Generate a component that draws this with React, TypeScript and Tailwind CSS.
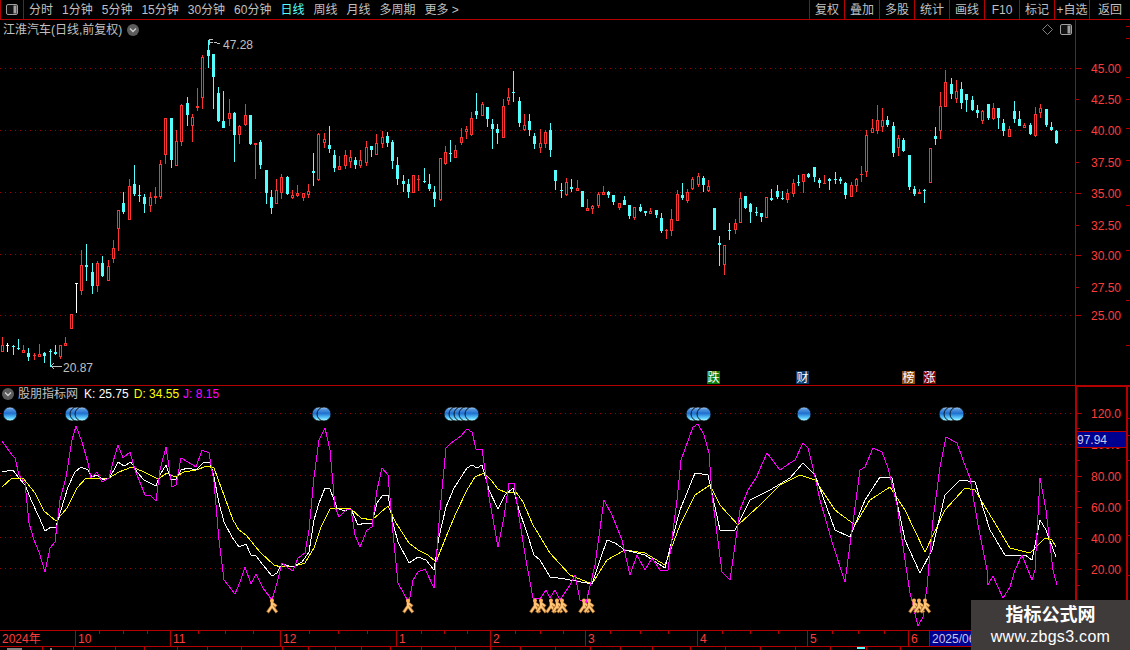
const FONT = "font-['Liberation_Sans','Noto_Sans_CJK_SC',sans-serif]";

// x, high, body top, body bottom, low, kind (r hollow red, c filled cyan, w white)
type Candle = [number, number, number, number, number, "r" | "c" | "w"];

const candles: Candle[] = [
  [2,337,345,352,352,"r"],[7,343,345,346,352,"w"],[13,345,346,347,355,"c"],[18,339,348,349,350,"c"],[23,345,350,353,353,"r"],
  [28,348,353,357,361,"c"],[34,353,355,356,360,"r"],[39,344,354,357,357,"r"],[44,352,353,356,363,"c"],[50,349,351,352,367,"c"],
  [55,345,352,354,355,"c"],[60,345,345,357,359,"r"],[65,337,343,346,346,"r"],[71,314,314,329,329,"r"],[76,283,283,284,313,"w"],
  [81,250,265,291,295,"r"],[86,244,265,267,281,"c"],[92,263,272,286,294,"c"],[97,261,263,286,292,"r"],[102,256,263,276,277,"c"],
  [108,260,266,281,281,"r"],[113,240,248,259,263,"r"],[118,210,210,229,251,"r"],[123,192,203,212,214,"c"],[129,179,186,220,220,"r"],
  [134,165,184,194,196,"c"],[139,185,195,196,202,"c"],[144,194,197,204,213,"c"],[150,192,197,206,212,"r"],[155,187,196,198,204,"r"],
  [160,160,164,197,199,"r"],[165,118,118,155,164,"r"],[171,118,118,160,168,"c"],[176,130,141,166,166,"r"],[181,104,105,142,146,"r"],
  [187,97,103,115,126,"c"],[192,114,117,126,142,"r"],[197,88,106,108,111,"r"],[202,55,57,98,109,"r"],[208,40,50,56,68,"c"],
  [213,54,54,77,109,"c"],[218,87,93,121,122,"c"],[223,91,121,128,128,"c"],[229,99,113,119,126,"r"],[234,112,113,135,162,"c"],
  [239,125,126,135,144,"r"],[245,104,115,125,126,"r"],[250,115,115,144,145,"c"],[255,143,143,145,179,"r"],[260,140,142,165,169,"c"],
  [266,170,170,193,204,"c"],[271,190,197,208,214,"c"],[276,179,190,204,204,"r"],[281,174,177,193,199,"r"],[287,176,177,194,195,"c"],
  [292,190,195,198,199,"r"],[297,185,193,196,197,"r"],[303,193,193,198,201,"r"],[308,184,191,195,198,"r"],[313,153,171,173,186,"c"],
  [318,133,134,180,181,"r"],[324,133,139,143,148,"r"],[329,126,145,149,153,"c"],[334,150,155,168,172,"c"],[339,156,166,170,170,"r"],
  [345,150,155,166,169,"r"],[350,150,157,162,168,"r"],[355,157,160,165,169,"c"],[360,150,160,166,168,"r"],[366,141,147,163,166,"r"],
  [371,146,146,150,157,"c"],[376,134,143,155,155,"r"],[382,131,137,144,148,"r"],[387,132,136,143,147,"c"],[392,140,142,161,169,"c"],
  [397,157,165,179,185,"c"],[403,175,181,184,192,"c"],[408,179,184,192,198,"c"],[413,175,175,193,193,"r"],[418,175,179,180,191,"r"],
  [424,168,181,182,183,"c"],[429,174,184,189,191,"c"],[434,186,192,199,207,"c"],[440,158,158,200,201,"r"],[445,146,152,164,165,"r"],
  [450,140,153,154,162,"c"],[455,145,150,158,158,"r"],[461,128,137,143,145,"r"],[466,126,129,132,139,"r"],[471,112,118,135,136,"r"],
  [476,93,111,115,119,"c"],[482,102,104,116,116,"r"],[487,107,107,119,127,"c"],[492,119,124,129,149,"c"],[497,124,129,133,144,"c"],
  [503,99,106,138,138,"r"],[508,88,97,101,105,"r"],[513,71,92,93,102,"c"],[519,97,101,123,127,"c"],[524,114,125,130,131,"r"],
  [529,114,121,130,136,"c"],[534,133,136,144,149,"c"],[540,129,143,148,153,"r"],[545,130,132,144,148,"r"],[550,123,130,150,157,"c"],
  [555,170,170,181,190,"c"],[561,183,190,191,198,"c"],[566,178,182,195,196,"r"],[571,179,187,189,192,"c"],[577,180,188,191,191,"r"],
  [582,191,191,207,207,"c"],[587,199,208,211,211,"r"],[592,205,206,209,214,"r"],[598,192,194,206,208,"r"],[603,186,192,195,195,"r"],
  [608,191,192,195,198,"c"],[613,195,195,202,205,"c"],[619,203,203,208,210,"r"],[624,196,200,205,205,"c"],[629,205,205,216,219,"c"],
  [634,207,207,218,220,"r"],[640,204,207,211,212,"c"],[645,211,211,213,216,"c"],[650,208,211,214,214,"r"],[656,210,210,215,218,"c"],
  [661,213,218,231,233,"c"],[666,229,230,231,239,"r"],[671,209,219,231,236,"r"],[677,190,194,221,221,"r"],[682,183,195,198,200,"c"],
  [687,189,192,201,203,"r"],[692,177,179,189,190,"r"],[698,173,176,185,187,"r"],[703,176,178,185,192,"c"],[708,180,186,191,192,"r"],
  [714,208,208,230,230,"c"],[719,236,243,245,266,"c"],[724,245,245,265,275,"r"],[729,223,230,231,240,"c"],[735,219,223,230,234,"r"],
  [740,192,198,223,223,"r"],[745,196,196,208,209,"c"],[750,203,204,212,223,"c"],[756,207,212,213,216,"c"],[761,213,213,217,222,"c"],
  [766,197,197,218,218,"r"],[771,189,198,200,201,"c"],[777,185,191,197,199,"c"],[782,191,198,199,200,"c"],[787,189,193,200,203,"r"],
  [793,179,183,194,197,"r"],[798,175,182,183,186,"c"],[803,174,174,182,193,"r"],[808,173,174,177,178,"c"],[814,167,167,177,182,"c"],
  [819,178,180,183,188,"c"],[824,175,183,184,184,"r"],[829,178,179,181,190,"c"],[835,172,179,180,184,"c"],[840,177,179,181,184,"c"],
  [845,182,183,195,199,"c"],[851,182,185,197,197,"r"],[856,178,179,186,192,"r"],[861,166,174,175,182,"r"],[866,130,135,172,177,"r"],
  [872,119,128,133,133,"r"],[877,105,120,131,134,"r"],[882,108,120,127,132,"r"],[887,116,120,125,127,"c"],[893,122,126,153,157,"c"],
  [898,135,138,148,156,"r"],[903,138,140,151,152,"c"],[909,155,155,187,190,"c"],[914,186,189,194,196,"c"],[919,189,192,194,194,"r"],
  [924,189,190,191,203,"c"],[930,148,148,183,183,"r"],[935,127,136,139,145,"c"],[940,92,106,131,139,"r"],[945,70,82,107,107,"r"],
  [951,78,84,94,99,"c"],[956,80,91,99,103,"r"],[961,82,89,103,109,"c"],[966,94,94,100,112,"c"],[972,96,100,110,111,"c"],
  [977,105,110,113,118,"c"],[982,110,111,121,124,"r"],[988,104,104,118,120,"c"],[993,103,108,119,120,"r"],[998,108,108,118,129,"c"],
  [1003,119,123,131,136,"c"],[1009,126,129,137,137,"r"],[1014,101,111,119,123,"c"],[1019,111,119,126,126,"c"],[1024,123,125,128,128,"r"],
  [1030,123,125,134,135,"c"],[1035,107,114,136,137,"r"],[1040,104,108,113,118,"r"],[1046,109,109,125,127,"c"],[1051,122,127,130,131,"c"],
  [1056,130,131,143,144,"c"],
];

const lineJ =
  "2,441 7,448 12,455 15,458 19,475 25,483 29,523 34,540 39,552 45,572 50,548 55,542 60,500 66,477 72,440 76,426 82,442 88,463 91,478 97,472 102,482 109,478 113,462 118,445 123,458 130,452 135,470 145,495 151,496 156,501 160,470 166,447 172,487 176,485 181,458 188,462 196,467 202,450 209,453 214,482 219,540 224,580 228,585 235,594 240,582 245,567 251,584 256,574 263,588 272,600 277,583 282,563 288,568 293,571 298,558 305,553 309,530 314,477 319,440 325,428 330,450 335,507 339,517 346,510 351,509 355,535 360,547 367,530 372,527 377,490 382,468 388,475 393,533 398,583 409,603 413,580 418,572 425,569 434,588 440,510 446,448 451,443 461,436 467,429 472,432 476,449 482,449 489,497 498,547 504,517 509,483 514,483 519,517 526,560 533,598 540,599 546,590 550,598 555,590 560,600 570,585 575,575 580,600 586,603 595,565 604,500 612,515 622,540 630,575 637,555 645,570 652,558 660,570 668,570 677,500 681,460 693,427 698,424 704,435 709,453 712,495 722,572 730,580 740,510 748,490 756,478 767,453 780,470 790,463 795,460 803,443 808,448 813,468 820,500 833,545 845,582 860,470 865,467 873,448 882,452 888,468 897,505 905,560 910,593 918,626 923,617 927,587 933,520 940,467 946,437 957,443 963,460 970,478 978,525 987,570 988,585 993,576 1003,598 1010,587 1015,570 1022,555 1028,570 1032,580 1035,570 1040,478 1046,510 1053,570 1057,585";
const lineK =
  "2,472 13,470 18,477 25,485 32,502 39,517 45,531 51,527 56,527 61,510 68,487 75,472 81,467 88,470 92,477 97,475 104,480 109,478 114,470 118,462 124,466 131,462 137,472 144,480 156,486 160,475 166,465 171,479 176,479 181,470 188,468 196,470 204,462 210,462 214,477 219,503 224,522 232,537 239,547 246,544 251,555 256,556 263,565 272,576 277,573 282,564 293,567 302,562 309,552 314,520 319,503 325,488 330,489 337,508 344,511 351,509 358,525 365,523 372,523 377,503 382,496 388,495 393,523 398,542 409,563 418,557 426,560 434,570 439,537 446,507 454,488 467,468 472,465 477,468 482,465 489,490 498,509 505,495 513,488 519,510 526,530 534,555 540,560 550,577 565,579 592,584 600,560 607,540 615,543 625,550 645,555 665,568 672,540 680,510 695,473 708,475 720,530 735,530 750,500 770,490 790,478 803,463 815,475 835,530 850,537 865,500 880,477 892,478 905,540 920,573 932,550 945,495 960,480 975,482 990,530 1005,555 1025,555 1032,560 1040,520 1046,530 1056,557";
const lineD =
  "2,487 12,478 23,478 35,493 44,511 56,521 67,508 77,488 86,478 109,478 119,472 132,467 144,472 158,479 167,473 175,477 184,472 196,470 207,466 214,468 225,498 233,520 239,530 246,535 260,552 274,565 281,567 295,566 305,563 314,548 321,527 330,509 337,508 351,509 361,518 372,520 388,506 396,523 409,543 418,550 428,555 436,562 446,537 456,513 467,490 475,477 484,473 491,480 498,489 507,493 516,492 523,502 533,525 550,553 570,575 592,584 607,560 625,550 645,553 665,565 680,525 695,495 710,485 720,505 738,525 760,505 780,485 800,475 815,480 835,510 855,525 870,500 890,487 905,510 925,552 945,510 965,488 975,490 990,515 1010,548 1030,553 1045,538 1052,540 1056,547";

const balls = [10, 72, 77, 82, 319, 324, 451, 456, 461, 466, 472, 693, 698, 704, 804, 946, 951, 957];
const people = [272, 408, 535, 541, 551, 557, 562, 584, 589, 914, 919, 925];

const periods = [
  { label: "分时" }, { label: "1分钟" }, { label: "5分钟" }, { label: "15分钟" }, { label: "30分钟" }, { label: "60分钟" },
  { label: "日线", active: true }, { label: "周线" }, { label: "月线" }, { label: "多周期" }, { label: "更多 >" },
];
const actions = ["复权", "叠加", "多股", "统计", "画线", "F10", "标记", "+自选", "返回"];

const months = [
  { label: "2024年", w: 75 }, { label: "10", w: 95 }, { label: "11", w: 110 }, { label: "12", w: 116 }, { label: "1", w: 94 },
  { label: "2", w: 95 }, { label: "3", w: 112 }, { label: "4", w: 110 }, { label: "5", w: 101 }, { label: "6", w: 21 },
];
const dateTicks = [99, 123, 147, 198, 225, 253, 309, 338, 367, 421, 444, 467, 515, 540, 563, 610, 640, 668, 722, 750, 778, 832, 858, 884];
const lowerTicks = [42, 73, 115, 144, 177, 207, 241, 282, 308, 335, 361, 390, 421, 455, 490, 520, 555, 590, 620, 652, 690, 725, 760, 795, 830, 866, 900];

const mainLabels: [string, number][] = [
  ["45.00", 68], ["42.50", 99], ["40.00", 130], ["37.50", 162], ["35.00", 193], ["32.50", 225], ["30.00", 255], ["27.50", 287], ["25.00", 315],
];
const subLabels: [string, number][] = [["120.0", 413], ["100.0", 444], ["80.00", 476], ["60.00", 507], ["40.00", 538], ["20.00", 569]];

function CandleMark({ c }: { c: Candle }) {
  const [x, h, t, b, l, k] = c;
  const fill = k === "r" ? "#ff3232" : k === "c" ? "#54ffff" : "#ffffff";
  const solid = k !== "r" || b - t < 3;
  return (
    <g fill={fill}>
      {h < t && <rect x={x} y={h} width={1} height={t - h} />}
      {l > b && <rect x={x} y={b} width={1} height={l - b} />}
      {solid ? (
        <rect x={x - 1} y={t} width={3} height={Math.max(b - t, 1)} />
      ) : (
        <rect x={x - 0.5} y={t + 0.5} width={2} height={b - t - 1} fill="none" stroke={fill} />
      )}
    </g>
  );
}

function Person({ x }: { x: number }) {
  return (
    <g transform={`translate(${x - 5} 598)`}>
      <path d="M0.5 14.5 L5 8 L10 14.5 M5 8 L5 5 L9.5 8.5" fill="none" stroke="#a86c2a" strokeWidth="3.2" />
      <path d="M1 14 L5 8 L9.5 14 M5 8 L5 5 L9 8" fill="none" stroke="#ffc678" strokeWidth="2" />
      <circle cx="5" cy="2.5" r="2" fill="#ffb45c" />
    </g>
  );
}

function Chevron({ className }: { className: string }) {
  return (
    <svg viewBox="0 0 12 12" className={className}>
      <circle cx="6" cy="6" r="6" fill="#5c5c5c" />
      <path d="M3 4.5 L6 7.5 L9 4.5" fill="none" stroke="#d0d0d0" strokeWidth="1.3" />
    </svg>
  );
}

function SplitIcon({ className }: { className: string }) {
  return (
    <svg viewBox="0 0 12 11" className={className}>
      <rect x="0.5" y="0.5" width="11" height="10" rx="1.5" fill="#111" stroke="#a0a0a0" />
      <rect x="7.5" y="1.5" width="3" height="8" fill="#a0a0a0" />
    </svg>
  );
}

function AxisTicks({ ys, x1, x2 }: { ys: number[]; x1: number; x2: number }) {
  return (
    <>
      {ys.map((y) => (
        <line key={y} x1={x1} x2={x2} y1={y + 0.5} y2={y + 0.5} stroke="#b40000" />
      ))}
    </>
  );
}

export default function App() {
  return (
    <div className={`${FONT} relative flex h-[650px] w-[1130px] flex-col overflow-hidden bg-black text-[12px] leading-none text-[#c0c0c0]`}>
      {/* top toolbar */}
      <div className="flex h-[20px] shrink-0 items-center border-b border-[#b40000]">
        <div className="flex h-full w-[24px] items-center justify-center border-x border-[#b40000]">
          <SplitIcon className="h-[11px] w-[12px]" />
        </div>
        <div className="flex flex-1 items-center gap-[9px] pl-[5px]">
          {periods.map((p) => (
            <span key={p.label} className={p.active ? "text-[#54ffff]" : ""}>
              {p.label}
            </span>
          ))}
        </div>
        <div className="flex h-full">
          {actions.map((a, i) => (
            <div key={a} className={`flex h-full items-center justify-center border-l border-[#b40000] ${i === 8 ? "w-[41px]" : "w-[35px]"}`}>
              {a}
            </div>
          ))}
        </div>
      </div>

      {/* price panel */}
      <div className="flex h-[366px] shrink-0 border-b border-[#b40000]">
        <div className="relative w-[1075px]">
          <svg viewBox="0 20 1075 365" className="absolute inset-0 h-[365px] w-[1075px]" shapeRendering="crispEdges">
            {[68, 130, 192, 254, 315].map((y) => (
              <line key={y} x1="0" x2="1075" y1={y + 0.5} y2={y + 0.5} stroke="#a00000" strokeDasharray="1 4" />
            ))}
            {candles.map((c) => (
              <CandleMark key={c[0]} c={c} />
            ))}
            <path d="M209 39 L209 45 M209 39 L213 39 M210 42 L213 42 M214 42 L220 44" stroke="#c0c0c0" fill="none" />
            <path d="M51 366 L62 366 M51 366 L54 363 M51 366 L54 369" stroke="#c0c0c0" fill="none" />
          </svg>
          <div className="relative flex h-[19px] items-center pl-[3px]">
            <span>江淮汽车(日线,前复权)</span>
            <Chevron className="ml-[5px] h-[12px] w-[12px]" />
            <div className="ml-auto flex items-center gap-[7px] pr-[3px]">
              <svg viewBox="0 0 11 11" className="h-[11px] w-[11px]">
                <path d="M5.5 0.5 L10.5 5.5 L5.5 10.5 L0.5 5.5 Z" fill="none" stroke="#808080" />
              </svg>
              <SplitIcon className="h-[11px] w-[12px]" />
            </div>
          </div>
          <span className="absolute left-[223px] top-[19px] text-[#c0c0c0]">47.28</span>
          <span className="absolute left-[63px] top-[342px] text-[#c0c0c0]">20.87</span>
          <span className="absolute left-[707px] top-[351px] flex h-[13px] w-[13px] items-center justify-center bg-[#0a7a0a] text-white">跌</span>
          <span className="absolute left-[796px] top-[351px] flex h-[13px] w-[13px] items-center justify-center bg-[#0a3a6a] text-white">财</span>
          <span className="absolute left-[902px] top-[351px] flex h-[13px] w-[13px] items-center justify-center bg-[#8a4a10] text-white">榜</span>
          <span className="absolute left-[923px] top-[351px] flex h-[13px] w-[13px] items-center justify-center bg-[#800000] text-white">涨</span>
        </div>
        <div className="w-[55px] border-l border-[#b40000]">
          <svg viewBox="1076 20 54 365" className="h-[365px] w-[54px]" shapeRendering="crispEdges">
            <AxisTicks ys={[68, 130, 193, 255, 315]} x1={1076} x2={1081} />
            <AxisTicks ys={[99, 162, 225, 287]} x1={1076} x2={1079} />
            <AxisTicks ys={[26, 38, 77, 99, 128, 160, 205, 250, 300, 345]} x1={1126} x2={1130} />
            {mainLabels.map(([t, y]) => (
              <text key={t} x="1091" y={y + 4.5} fill="#ff3c3c" fontSize="12" shapeRendering="auto">
                {t}
              </text>
            ))}
          </svg>
        </div>
      </div>

      {/* indicator panel */}
      <div className="flex h-[244px] shrink-0">
        <div className="relative w-[1075px]">
          <svg viewBox="0 386 1075 244" className="absolute inset-0 h-[244px] w-[1075px]" shapeRendering="crispEdges">
            <defs>
              <linearGradient id="ball" x1="0" y1="0" x2="0" y2="1">
                <stop offset="0" stopColor="#d4ebff" />
                <stop offset="0.14" stopColor="#5b9be0" />
                <stop offset="0.45" stopColor="#1f6fd0" />
                <stop offset="0.8" stopColor="#5fd0ff" />
                <stop offset="1" stopColor="#c4ffff" />
              </linearGradient>
            </defs>
            {[413, 444, 475, 506, 537, 568].map((y) => (
              <line key={y} x1="0" x2="1075" y1={y + 0.5} y2={y + 0.5} stroke="#a00000" strokeDasharray="1 4" />
            ))}
            <polyline points={lineD} fill="none" stroke="#ffff00" />
            <polyline points={lineK} fill="none" stroke="#ffffff" />
            <polyline points={lineJ} fill="none" stroke="#ff00ff" />
            <g shapeRendering="auto">
              {balls.map((x) => (
                <circle key={x} cx={x} cy="414" r="7" fill="url(#ball)" stroke="#000" strokeWidth="0.8" />
              ))}
              {people.map((x) => (
                <Person key={x} x={x} />
              ))}
            </g>
          </svg>
          <div className="relative flex h-[16px] items-center pl-[2px]">
            <Chevron className="h-[12px] w-[12px]" />
            <span className="ml-[4px]">股朋指标网</span>
            <span className="ml-[6px] text-white">K: 25.75</span>
            <span className="ml-[5px] text-[#ffff00]">D: 34.55</span>
            <span className="ml-[4px] text-[#ff00ff]">J: 8.15</span>
          </div>
        </div>
        <div className="relative w-[55px] border-l-2 border-t border-[#b40000]">
          <svg viewBox="1077 387 53 243" className="h-[243px] w-[53px]" shapeRendering="crispEdges">
            <line x1="1126.5" x2="1126.5" y1="387" y2="630" stroke="#b40000" strokeWidth="2" />
            <AxisTicks ys={[413, 444, 476, 507, 538, 569]} x1={1077} x2={1082} />
            <AxisTicks ys={[428, 460, 491, 522, 553, 585, 600, 615]} x1={1077} x2={1080} />
            <AxisTicks ys={[418, 435, 460, 500, 535, 575, 610]} x1={1127} x2={1130} />
            {subLabels.map(([t, y]) => (
              <text key={t} x="1091" y={y + 4.5} fill="#ff3c3c" fontSize="12" shapeRendering="auto">
                {t}
              </text>
            ))}
          </svg>
          <div className="absolute left-0 top-[44px] flex h-[17px] w-[49px] items-center border-y border-[#b40000] bg-[#000090] text-[#c8c8e8]">
            97.94
          </div>
        </div>
      </div>

      {/* date axis */}
      <div className="relative flex h-[17px] shrink-0 border-y border-[#b40000] text-[#ff3c3c]">
        {months.map((m, i) => (
          <div key={m.label} style={{ width: m.w }} className={`flex items-center pl-[2px] ${i > 0 ? "border-l border-[#b40000]" : ""}`}>
            {m.label}
          </div>
        ))}
        <div className="flex w-[42px] items-center overflow-hidden whitespace-nowrap border-l border-[#b40000] bg-[#000090] pl-[2px] text-[#c8c8e8]">
          2025/06
        </div>
        <svg viewBox="0 0 971 3" className="absolute left-0 top-0 h-[3px] w-[971px]" shapeRendering="crispEdges">
          {dateTicks.map((x) => (
            <line key={x} x1={x + 0.5} x2={x + 0.5} y1="0" y2="3" stroke="#b40000" />
          ))}
        </svg>
      </div>
      <div className="h-[3px] shrink-0">
        <svg viewBox="0 0 971 3" className="h-[3px] w-[971px]" shapeRendering="crispEdges">
          {lowerTicks.map((x) => (
            <line key={x} x1={x + 0.5} x2={x + 0.5} y1="0" y2="3" stroke="#b40000" />
          ))}
          <rect x="7" y="1" width="15" height="2" fill="#808080" />
          <rect x="50" y="1" width="2" height="2" fill="#808080" />
          <rect x="857" y="0" width="8" height="2" fill="#54ffff" />
        </svg>
      </div>

      {/* site watermark over the bottom corner */}
      <div className="absolute bottom-0 right-0 flex h-[50px] w-[159px] flex-col items-center bg-[#3f3b3b] pt-[6px] text-white">
        <span className="text-[18px] font-bold leading-[18px]">指标公式网</span>
        <span className="mt-[6px] text-[16px] leading-[14px] tracking-[0.3px]">www.zbgs3.com</span>
      </div>
    </div>
  );
}
